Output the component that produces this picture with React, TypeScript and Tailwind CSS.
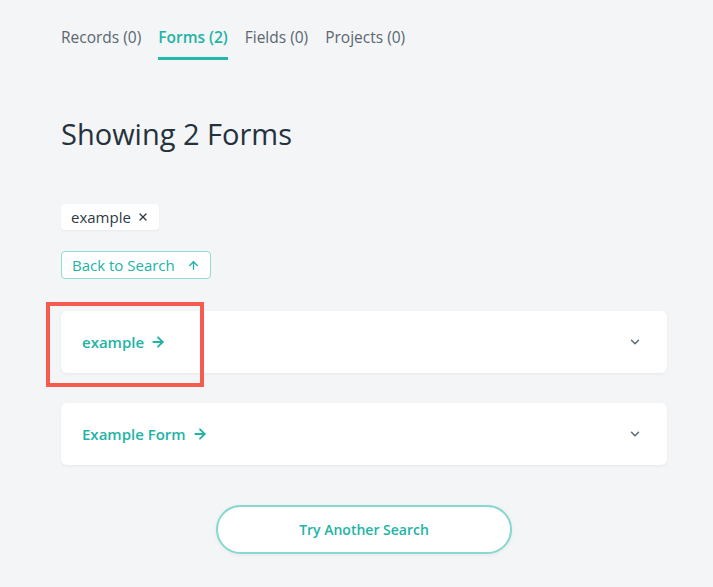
import { ArrowRight, ArrowUp, ChevronDown, X } from "lucide-react"

const tabs = [
  { label: "Records (0)", active: false },
  { label: "Forms (2)", active: true },
  { label: "Fields (0)", active: false },
  { label: "Projects (0)", active: false },
]

const forms = ["example", "Example Form"]

function FormCard({ name, highlight }: { name: string; highlight?: boolean }) {
  return (
    <div className="relative">
      <div className="flex h-[62px] items-center justify-between rounded-md bg-white px-[21px] shadow-[0_1px_3px_rgba(0,0,0,0.06)]">
        <span className="flex items-center gap-[6px] text-[15px] font-semibold text-[#22b3a6]">
          {name}
          <ArrowRight className="h-[16px] w-[16px]" strokeWidth={2.75} />
        </span>
        <ChevronDown className="mr-[4px] h-[14px] w-[14px] text-[#5d6a73]" strokeWidth={2.5} />
      </div>
      {highlight && (
        <div className="pointer-events-none absolute left-[-15px] top-[-9px] h-[85px] w-[158px] border-[4px] border-[#f55b4e]" />
      )}
    </div>
  )
}

export default function App() {
  return (
    <main
      className="min-h-[587px] bg-[#f4f5f7] pl-[61px] pr-[46px] pt-[26px] pb-[32px]"
      style={{ fontFamily: '"Open Sans", "Noto Sans", sans-serif' }}
    >
      {/* Tabs */}
      <div className="flex gap-[17px]">
        {tabs.map((t) => (
          <div
            key={t.label}
            className={`border-b-[3px] pb-[9px] text-[15.5px] leading-[22px] ${
              t.active ? "border-[#26b8aa] font-semibold text-[#22b3a6]" : "border-transparent text-[#5b6770]"
            }`}
          >
            {t.label}
          </div>
        ))}
      </div>

      <h1 className="mt-[56px] text-[29px] leading-[36px] text-[#24323d]">Showing 2 Forms</h1>

      <div className="mt-[52px] flex">
        <span className="flex h-[26px] items-center gap-[6px] rounded bg-white px-[10px] text-[15px] text-[#2c3a45] shadow-[0_1px_2px_rgba(0,0,0,0.05)]">
          example
          <X className="h-[12px] w-[12px]" strokeWidth={2.5} />
        </span>
      </div>

      <div className="mt-[21px] flex">
        <button className="flex h-[28px] items-center gap-[12px] rounded border border-[#8fdcd4] bg-white px-[10px] text-[15px] text-[#22b3a6]">
          Back to Search
          <ArrowUp className="h-[13px] w-[13px]" strokeWidth={2.5} />
        </button>
      </div>

      <div className="mt-[32px] flex flex-col gap-[30px]">
        {forms.map((f, i) => (
          <FormCard key={f} name={f} highlight={i === 0} />
        ))}
      </div>

      <div className="mt-[40px] flex justify-center">
        <button className="h-[49px] w-[296px] rounded-full border-2 border-[#86d8d0] bg-white text-[14px] font-semibold text-[#22b3a6] shadow-[0_1px_4px_rgba(0,0,0,0.06)]">
          Try Another Search
        </button>
      </div>
    </main>
  )
}
